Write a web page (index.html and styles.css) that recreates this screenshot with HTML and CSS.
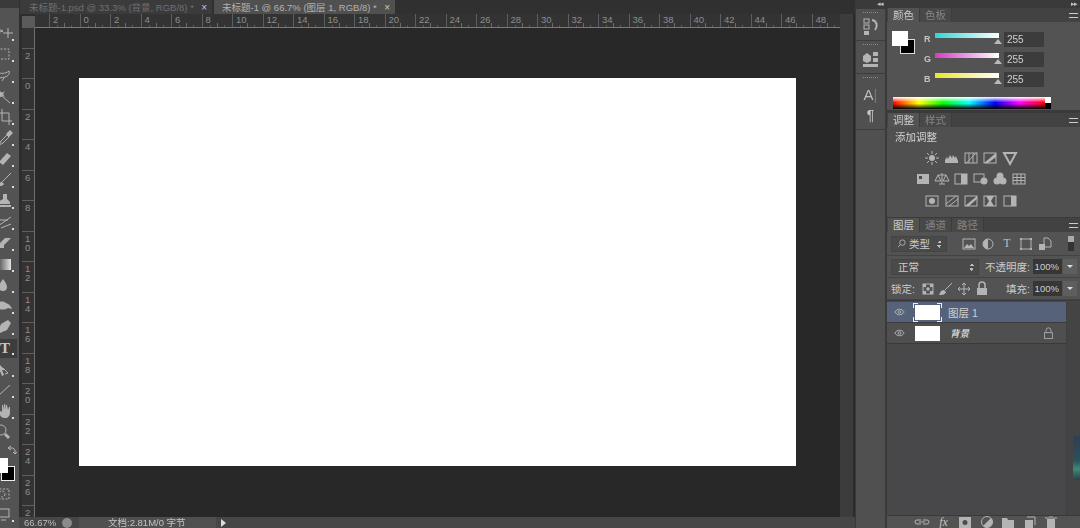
FILE: index.html
```html
<!DOCTYPE html>
<html lang="zh">
<head>
  <meta charset="utf-8">
  <link rel="stylesheet" href="styles.css">
  <title>Photoshop</title>
</head>
<body>
<div class="app">

  <!-- tools -->
  <nav class="tools">
    <div class="tool more"><svg class="ico" viewBox="0 0 16 16"><path d="M-2 3l7 3-3 1zM10 3v10M5 8h10"/></svg></div>
    <div class="tool more"><svg class="ico dash" viewBox="0 0 16 16"><rect x="-1" y="3" width="12" height="10"/></svg></div>
    <div class="tool more"><svg class="ico" viewBox="0 0 16 16"><path d="M0 5c3 2 7 2 11-1 1 3-1 5-4 6-2 1-2 3-3 4M0 10c2 1 4 1 6 0"/></svg></div>
    <div class="tool more"><svg class="ico" viewBox="0 0 16 16"><path d="M0 5l4 3 8 7M0 9l4-1 1-4" /><path class="solid" d="M1 2l3 3 3-2-2 3 2 3-3-2-3 2z"/></svg></div>
    <div class="tool more"><svg class="ico" viewBox="0 0 16 16"><path d="M4 0v12h10M0 4h11v12"/></svg></div>
    <div class="tool more"><svg class="ico" viewBox="0 0 16 16"><path d="M1 15l2-4 6-6 2 2-6 6z"/><path class="solid" d="M8 4l4-4 3 3-4 4z"/></svg></div>
    <div class="tool more"><svg class="ico" viewBox="0 0 16 16"><path class="solid" d="M1 11l8-9 4 3-8 9z"/><path d="M4 7l4 4"/></svg></div>
    <div class="tool more"><svg class="ico" viewBox="0 0 16 16"><path d="M13 1L4 10"/><path class="solid" d="M1 14c0-3 1-4 3-4l2 2c-1 2-3 2-5 2z"/></svg></div>
    <div class="tool more"><svg class="ico" viewBox="0 0 16 16"><path class="solid" d="M5 1h4v5l3 3v2H0V9l5-3zM0 12h13v2H0z"/></svg></div>
    <div class="tool more"><svg class="ico" viewBox="0 0 16 16"><path d="M0 12L13 3M0 6h10M3 14l10-4"/></svg></div>
    <div class="tool more"><svg class="ico" viewBox="0 0 16 16"><path class="solid" d="M0 10l7-7h6l-7 7v3H0z"/></svg></div>
    <div class="tool more"><div class="grad-ico"></div></div>
    <div class="tool more"><svg class="ico" viewBox="0 0 16 16"><path class="solid" d="M5 2c2 3 4 5 4 8a4 4 0 0 1-8 0c0-3 2-5 4-8z"/></svg></div>
    <div class="tool more"><svg class="ico" viewBox="0 0 16 16"><path class="solid" d="M-2 6c3-3 7-3 10-1 3 1 5 3 6 6l-4-1c-3 2-8 2-12 0z"/></svg></div>
    <div class="tool more"><svg class="ico" viewBox="0 0 16 16"><path class="solid" d="M0 12l3-7 7-4 3 3-4 7-7 3z"/></svg></div>
    <div class="tool more selected"><span class="t-tool">T</span></div>
    <div class="tool more"><svg class="ico" viewBox="0 0 16 16"><path class="solid" d="M0 2l7 7H4l2 5-2 1-2-5-2 2z"/><path d="M5 7l5 5-3 1"/></svg></div>
    <div class="tool more"><svg class="ico" viewBox="0 0 16 16"><path d="M0 14L12 3"/></svg></div>
    <div class="tool more"><svg class="ico" viewBox="0 0 16 16"><path class="solid" d="M1 7l3 2V2h1l1 5V1h1l1 6V2h1l1 5 1-3h1v5c0 4-2 6-5 6s-4-1-5-3z"/></svg></div>
    <div class="tool"><svg class="ico" viewBox="0 0 16 16"><circle cx="3" cy="6" r="5"/><path d="M7 10l4 4" stroke-width="3"/></svg></div>
    <div class="swatches">
      <svg class="swap" viewBox="0 0 10 10"><path d="M1 3h5l2 2v4M4 1L1 3l3 2M6 7l2 2 2-2"/></svg>
      <div class="fg-bg"><span class="tool-bg"></span><span class="tool-fg"></span></div>
    </div>
    <div class="tool mask"><svg class="ico dash" viewBox="0 0 16 16"><rect x="-2" y="3" width="13" height="10"/><circle cx="4" cy="8" r="3"/></svg></div>
    <div class="tool more"><svg class="ico" viewBox="0 0 16 16"><rect x="0" y="3" width="11" height="8"/><path d="M3 14h5"/></svg></div>
  </nav>

  <!-- document area -->
  <main class="work">
    <div class="tabs">
      <div class="tab">
        <span class="tab-name">未标题-1.psd @ 33.3% (背景, RGB/8) *</span><span class="tab-x">×</span>
      </div>
      <div class="tab tab-active">
        <span class="tab-name">未标题-1 @ 66.7% (图层 1, RGB/8) *</span><span class="tab-x">×</span>
      </div>
    </div>
    <div class="doc">
      <div class="corner"></div>
      <div class="ruler-top">
        <span class="mark">2</span><span class="mark">0</span><span class="mark">2</span><span class="mark">4</span><span class="mark">6</span><span class="mark">8</span><span class="mark">10</span><span class="mark">12</span><span class="mark">14</span><span class="mark">16</span><span class="mark">18</span><span class="mark">20</span><span class="mark">22</span><span class="mark">24</span><span class="mark">26</span><span class="mark">28</span><span class="mark">30</span><span class="mark">32</span><span class="mark">34</span><span class="mark">36</span><span class="mark">38</span><span class="mark">40</span><span class="mark">42</span><span class="mark">44</span><span class="mark">46</span><span class="mark">48</span><span class="mark"></span>
      </div>
      <div class="scroll-v"></div>
      <div class="ruler-left">
        <span class="vmark">2</span><span class="vmark">0</span><span class="vmark">2</span><span class="vmark">4</span><span class="vmark">6</span><span class="vmark">8</span><span class="vmark">1<br>0</span><span class="vmark">1<br>2</span><span class="vmark">1<br>4</span><span class="vmark">1<br>6</span><span class="vmark">1<br>8</span><span class="vmark">2<br>0</span><span class="vmark">2<br>2</span><span class="vmark">2<br>4</span><span class="vmark">2<br>6</span><span class="vmark">2<br>8</span>
      </div>
      <div class="pasteboard">
        <div class="sheet"></div>
      </div>
    </div>
    <div class="status">
      <span class="zoom-val">66.67%</span>
      <span class="status-ico"></span>
      <span class="doc-info">文档:2.81M/0 字节</span>
      <span class="status-arrow"></span>
    </div>
  </main>

  <!-- collapsed dock -->
  <div class="dock">
    <div class="dock-arrows">◂◂</div>
    <div class="dock-body">
      <div class="dock-group g1">
        <svg class="ico big" viewBox="0 0 20 20"><rect x="3" y="2" width="5" height="4"/><rect x="3" y="8" width="5" height="4"/><rect class="solid" x="3" y="14" width="5" height="4"/><path d="M11 3c5 1 6 6 3 10" stroke-width="2"/></svg>
      </div>
      <div class="dock-group g2">
        <svg class="ico big" viewBox="0 0 20 20"><path class="solid" d="M2 7l4-3 4 3v5l-4 2-4-2zM12 3h5v4h-5zM12 9h5v4h-5zM2 15h15v3H2z"/></svg>
      </div>
      <div class="dock-group g3">
        <span class="dock-a">A<i>|</i></span>
        <span class="dock-p">¶</span>
      </div>
    </div>
  </div>

  <!-- panels -->
  <aside class="panels">
    <div class="collapse">▸▸</div>

    <section class="panel panel-color">
      <header class="panel-tabs">
        <span class="ptab on">颜色</span><span class="ptab">色板</span>
        <span class="pmenu"></span>
      </header>
      <div class="color-top">
        <div class="color-chips"><span class="chip-bg"></span><span class="chip-fg"></span></div>
        <div class="channels">
          <div class="channel"><b>R</b><span class="slide slide-r"><i class="thumb"></i></span><span class="num">255</span></div>
          <div class="channel"><b>G</b><span class="slide slide-g"><i class="thumb"></i></span><span class="num">255</span></div>
          <div class="channel"><b>B</b><span class="slide slide-b"><i class="thumb"></i></span><span class="num">255</span></div>
        </div>
      </div>
      <div class="spectrum"><div class="ramp"></div><div class="ends"></div></div>
    </section>

    <section class="panel panel-adjust">
      <header class="panel-tabs">
        <span class="ptab on">调整</span><span class="ptab">样式</span>
        <span class="pmenu"></span>
      </header>
      <p class="adj-title">添加调整</p>
      <div class="adj-row">
        <svg class="ico" viewBox="0 0 16 16"><circle class="solid" cx="8" cy="8" r="3"/><path d="M8 1v3M8 12v3M1 8h3M12 8h3M3 3l2 2M11 11l2 2M13 3l-2 2M5 11l-2 2"/></svg>
        <svg class="ico" viewBox="0 0 16 16"><path class="solid" d="M1 13V10l2-3 1 2 2-4 2 3 1-3 2 3 1-2 2 5v2z"/></svg>
        <svg class="ico" viewBox="0 0 16 16"><rect x="2" y="3" width="12" height="10"/><path d="M2 13C7 12 9 5 14 3M6 3v10M10 3v10"/></svg>
        <svg class="ico" viewBox="0 0 16 16"><rect x="2" y="3" width="12" height="10"/><path class="solid" d="M2 13L14 3v4L6 13z"/></svg>
        <svg class="ico" viewBox="0 0 16 16"><path d="M2 3h12L8 14z" stroke-width="2"/></svg>
      </div>
      <div class="adj-row">
        <svg class="ico" viewBox="0 0 16 16"><path class="solid" d="M2 3h12v10H2z"/><path class="cut" d="M4 5h3v3H4z"/></svg>
        <svg class="ico" viewBox="0 0 16 16"><path d="M8 2v11M4 4h8M1 10l3-6 3 6zM9 10l3-6 3 6zM5 13h6"/></svg>
        <svg class="ico" viewBox="0 0 16 16"><rect x="2" y="3" width="12" height="10"/><path class="solid" d="M8 3h6v10H8z"/></svg>
        <svg class="ico" viewBox="0 0 16 16"><rect x="1" y="3" width="10" height="8"/><circle class="solid" cx="11" cy="10" r="3.5"/></svg>
        <svg class="ico" viewBox="0 0 16 16"><circle class="solid" cx="8" cy="5" r="3.5"/><circle class="solid" cx="5" cy="10" r="3.5"/><circle class="solid" cx="11" cy="10" r="3.5"/></svg>
        <svg class="ico" viewBox="0 0 16 16"><rect x="2" y="3" width="12" height="10"/><path d="M2 6.500h12M2 9.500h12M6 3v10M10 3v10"/></svg>
      </div>
      <div class="adj-row">
        <svg class="ico" viewBox="0 0 16 16"><rect x="2" y="3" width="12" height="10"/><circle class="solid" cx="8" cy="8" r="3"/></svg>
        <svg class="ico" viewBox="0 0 16 16"><rect x="2" y="3" width="12" height="10"/><path d="M2 11L12 3M5 13l9-7"/></svg>
        <svg class="ico" viewBox="0 0 16 16"><rect x="2" y="3" width="12" height="10"/><path class="solid" d="M2 13L14 3v3L6 13z"/></svg>
        <svg class="ico" viewBox="0 0 16 16"><rect x="2" y="3" width="12" height="10"/><path class="solid" d="M4 3h8L9 8l3 5H4l3-5z"/></svg>
        <svg class="ico" viewBox="0 0 16 16"><rect x="2" y="3" width="12" height="10"/><path class="solid" d="M9 3h5v10H9z"/></svg>
      </div>
    </section>

    <section class="panel panel-layers">
      <header class="panel-tabs">
        <span class="ptab on">图层</span><span class="ptab">通道</span><span class="ptab">路径</span>
        <span class="pmenu"></span>
      </header>
      <div class="layer-filter">
        <div class="field kind"><svg class="ico tiny" viewBox="0 0 10 10"><circle cx="6" cy="4" r="3"/><path d="M4 6L1 9"/></svg><span>类型</span><em class="updown"></em></div>
        <div class="filter-icons">
          <svg class="ico" viewBox="0 0 16 16"><rect x="2" y="3" width="12" height="10"/><path class="solid" d="M3 12l3-4 2 2 2-2 3 4z"/></svg>
          <svg class="ico" viewBox="0 0 16 16"><circle cx="8" cy="8" r="5"/><path class="solid" d="M8 3a5 5 0 0 0 0 10z"/></svg>
          <span class="filter-t">T</span>
          <svg class="ico" viewBox="0 0 16 16"><rect x="3" y="3" width="10" height="10"/><path class="solid" d="M2 2h2v2H2zM12 2h2v2h-2zM2 12h2v2H2zM12 12h2v2h-2z"/></svg>
          <svg class="ico" viewBox="0 0 16 16"><path d="M7 2h4l3 3v6H7z"/><path class="solid" d="M2 8h6v6H2z"/></svg>
        </div>
        <span class="filter-toggle"></span>
      </div>
      <div class="layer-blend">
        <div class="field mode"><span>正常</span><em class="updown"></em></div>
        <label class="lbl">不透明度:</label>
        <span class="pct">100%</span><span class="step"></span>
      </div>
      <div class="layer-lock">
        <label class="lbl lock-lbl">锁定:</label>
        <svg class="ico" viewBox="0 0 16 16"><path class="solid" d="M3 3h3v3H3zM10 3h3v3h-3zM6.500 6.500h3v3h-3zM3 10h3v3H3zM10 10h3v3h-3z"/><rect x="3" y="3" width="10" height="10"/></svg>
        <svg class="ico" viewBox="0 0 16 16"><path d="M14 2L7 9"/><path class="solid" d="M1 14c1-1 1-5 5-5l2 2c-1 3-4 3-7 3z"/></svg>
        <svg class="ico" viewBox="0 0 16 16"><path d="M8 2v12M2 8h12M6 4l2-2 2 2M6 12l2 2 2-2M4 6L2 8l2 2M12 6l2 2-2 2"/></svg>
        <svg class="ico" viewBox="0 0 16 16"><path class="solid" d="M3 7h10v7H3z"/><path d="M5 7V4a3 3 0 0 1 6 0v3" stroke-width="1.500"/></svg>
        <label class="lbl fill-lbl">填充:</label>
        <span class="pct">100%</span><span class="step"></span>
      </div>
      <div class="layer-body">
        <div class="layer-list">
          <div class="layer active">
            <svg class="eye" viewBox="0 0 12 8"><path d="M1 4c2-4 8-4 10 0-2 4-8 4-10 0z"/><circle cx="6" cy="4" r="1.500"/></svg>
            <span class="thumb-box framed"></span>
            <span class="layer-name">图层 1</span>
          </div>
          <div class="layer">
            <svg class="eye" viewBox="0 0 12 8"><path d="M1 4c2-4 8-4 10 0-2 4-8 4-10 0z"/><circle cx="6" cy="4" r="1.500"/></svg>
            <span class="thumb-box"></span>
            <span class="layer-name bg-name">背景</span>
            <svg class="ico lock" viewBox="0 0 16 16"><rect x="3" y="7" width="10" height="7"/><path d="M5 7V4a3 3 0 0 1 6 0v3"/></svg>
          </div>
        </div>
        <div class="list-scroll"><span class="teal"></span></div>
      </div>
      <footer class="layer-foot">
        <svg class="ico" viewBox="0 0 16 16"><path d="M7 6H3a2 2 0 0 0 0 4h4M9 6h4a2 2 0 0 1 0 4H9M5 8h6"/></svg>
        <span class="fx">fx</span>
        <svg class="ico" viewBox="0 0 16 16"><path class="solid" d="M2 3h12v11H2z"/><circle class="cut" cx="8" cy="8.500" r="2.500"/></svg>
        <svg class="ico" viewBox="0 0 16 16"><circle cx="8" cy="8" r="5.500"/><path class="solid" d="M12 4a5.500 5.500 0 0 1-8 8z"/></svg>
        <svg class="ico" viewBox="0 0 16 16"><path class="solid" d="M2 4h5l1 2h6v8H2z"/></svg>
        <svg class="ico" viewBox="0 0 16 16"><path class="solid" d="M3 6h8v8H3z"/><path d="M5 3h8v8"/></svg>
        <svg class="ico" viewBox="0 0 16 16"><path class="solid" d="M4 5h8v9H4z"/><path d="M2 4h12M6 2h4"/></svg>
      </footer>
    </section>
  </aside>

</div>
</body>
</html>
```

FILE: styles.css
```css
* {
  box-sizing: border-box;
}

html, body {
  margin: 0;
  height: 528px;
  overflow: hidden;
  background: #333;
}

body {
  font-family: "Liberation Sans", "Noto Sans CJK SC", sans-serif;
  font-size: 10px;
  color: #c4c4c4;
}

.app {
  display: flex;
  width: 1080px;
  height: 528px;
  overflow: hidden;
  filter: blur(0.4px);
}

/* shared icon look */
.ico {
  width: 16px;
  height: 16px;
  flex: none;
  overflow: visible;
  fill: none;
  stroke: #b4b4b4;
  stroke-width: 1;
}
.ico .solid {
  fill: #b4b4b4;
  stroke: none;
}
.ico .cut {
  fill: #4d4d4d;
  stroke: none;
}
.ico.dash {
  stroke-dasharray: 2 1.500;
}

/* tools */
.tools {
  width: 19px;
  flex: none;
  padding-top: 14.500px;
  background: #535353;
  border-top: 8px solid #3a3a3a;
  display: flex;
  flex-direction: column;
  overflow: hidden;
}
.tool {
  position: relative;
  height: 21px;
  flex: none;
  display: flex;
  align-items: center;
}
.tool .ico {
  margin-left: -2px;
}
.tool.more::after {
  content: "";
  position: absolute;
  right: 5px;
  bottom: 3px;
  width: 2px;
  height: 2px;
  background: #ddd;
}
.tool.selected {
  background: #3d3d3d;
  height: 19px;
  margin: 1px 2px 1px 0;
}
.tool.selected::after {
  right: 3px;
}
.t-tool {
  font: bold 15px "Liberation Serif", serif;
  color: #c6c6c6;
}
.grad-ico {
  width: 11px;
  height: 11px;
  background: linear-gradient(to right, #666, #e4e4e4);
}
.swatches {
  height: 41px;
  flex: none;
  padding-left: 7px;
}
.swap {
  width: 10px;
  height: 10px;
  display: block;
  margin-top: 2px;
  fill: none;
  stroke: #b5b5b5;
}
.fg-bg {
  position: relative;
  height: 28px;
  margin-left: -7px;
}
.tool-bg {
  position: absolute;
  left: 1px;
  top: 11px;
  width: 14px;
  height: 15px;
  background: #000;
  border: 1px solid #eee;
}
.tool-fg {
  position: absolute;
  left: 0;
  top: 3px;
  width: 8px;
  height: 15px;
  background: #fff;
}
.mask {
  height: 20px;
}

/* document area */
.work {
  width: 836px;
  flex: none;
  display: flex;
  flex-direction: column;
}
.tabs {
  height: 14px;
  flex: none;
  display: flex;
  background: #303030;
  padding-left: 1px;
  gap: 2px;
}
.tab {
  width: 192px;
  padding: 0 5px 0 9px;
  display: flex;
  justify-content: space-between;
  align-items: center;
  background: #3b3b3b;
  color: #707070;
  font-size: 9.500px;
  white-space: nowrap;
}
.tab-active {
  width: 181px;
  padding-left: 8px;
  background: #505050;
  color: #b2b2b2;
}
.tab-x {
  color: #c8c8c8;
  font-size: 10px;
}
.doc {
  flex: 1;
  min-height: 0;
  display: grid;
  grid-template-columns: 3px 13px 805px 15px;
  grid-template-rows: 14px 1fr;
  background: #2e2e2e;
}
.corner {
  grid-column: 2;
  grid-row: 1;
  margin-top: 2px;
  background: #5b5b5b;
}
.ruler-top {
  grid-column: 3;
  grid-row: 1;
  display: flex;
  overflow: hidden;
  padding-left: 14px;
  background: #333;
  border-bottom: 1px solid #7a7a7a;
}
.mark {
  width: 30.500px;
  flex: none;
  padding: 1px 0 0 3px;
  line-height: 10px;
  font-size: 9.500px;
  color: #8e8e8e;
  border-left: 1px solid #5e5e5e;
  background:
    linear-gradient(#6a6a6a, #6a6a6a) 50% 100% / 1px 4px no-repeat,
    linear-gradient(#5a5a5a, #5a5a5a) 25% 100% / 1px 2px no-repeat,
    linear-gradient(#5a5a5a, #5a5a5a) 75% 100% / 1px 2px no-repeat;
}
.scroll-v {
  grid-column: 4;
  grid-row: 1 / 3;
  background: #3c3c3c;
  border-right: 2px solid #2a2a2a;
}
.ruler-left {
  grid-column: 2;
  grid-row: 2;
  overflow: hidden;
  padding-top: 19.500px;
  background: #333;
  border-right: 1px solid #6f6f6f;
  display: flex;
  flex-direction: column;
}
.vmark {
  height: 30.500px;
  flex: none;
  padding: 2px 0 0 3px;
  font-size: 9.500px;
  line-height: 9px;
  color: #8e8e8e;
  border-top: 1px solid #5e5e5e;
}
.pasteboard {
  grid-column: 3;
  grid-row: 2;
  padding: 50px 0 0 44px;
  background: #282828;
  overflow: hidden;
}
.sheet {
  width: 717px;
  height: 388px;
  background: #fff;
}
.status {
  height: 11px;
  flex: none;
  display: flex;
  align-items: center;
  background: #464646;
  overflow: hidden;
  line-height: 11px;
}
.zoom-val {
  width: 43px;
  padding-left: 5px;
  font-size: 9.500px;
  color: #bdbdbd;
}
.status-ico {
  width: 10px;
  height: 10px;
  margin-right: 7px;
  border-radius: 50%;
  background: #8a8a8a;
}
.doc-info {
  width: 137px;
  height: 11px;
  padding-left: 29px;
  font-size: 9.500px;
  color: #c2c2c2;
  background: #505050;
}
.status-arrow {
  margin-left: 5px;
  width: 0;
  height: 0;
  border-left: 5px solid #ddd;
  border-top: 4px solid transparent;
  border-bottom: 4px solid transparent;
}

/* collapsed dock */
.dock {
  width: 32px;
  flex: none;
  padding: 0 2px 0 1px;
  display: flex;
  flex-direction: column;
  background: #3a3a3a;
}
.dock-arrows {
  height: 9px;
  text-align: right;
  padding-right: 2px;
  font-size: 7px;
  line-height: 8px;
  letter-spacing: -1px;
  color: #c0c0c0;
}
.dock-body {
  flex: 1;
  background: #505050;
}
.dock-group {
  display: flex;
  flex-direction: column;
  align-items: center;
  border-bottom: 1px solid #3d3d3d;
  padding-top: 3px;
}
.dock-group::before {
  content: "";
  width: 15px;
  height: 1px;
  margin-bottom: 4px;
  background: repeating-linear-gradient(to right, #8a8a8a 0 1px, transparent 1px 2px);
}
.g1 {
  height: 32px;
}
.g2 {
  height: 33px;
}
.g3 {
  height: 56px;
}
.ico.big {
  width: 20px;
  height: 20px;
}
.dock-a {
  margin-top: 3px;
  font-size: 15px;
  line-height: 19px;
  color: #bdbdbd;
}
.dock-a i {
  font-style: normal;
  color: #777;
}
.dock-p {
  font-size: 14px;
  line-height: 22px;
  color: #c8c8c8;
}

/* panels */
.panels {
  width: 193px;
  flex: none;
  display: flex;
  flex-direction: column;
  background: #3a3a3a;
}
.collapse {
  height: 8px;
  flex: none;
  text-align: right;
  padding-right: 3px;
  font-size: 7px;
  line-height: 8px;
  letter-spacing: -1px;
  color: #c0c0c0;
}
.panel {
  display: flex;
  flex-direction: column;
  background: #535353;
}
.panel-tabs {
  height: 14px;
  flex: none;
  display: flex;
  align-items: stretch;
  padding-left: 1px;
  background: #424242;
}
.ptab {
  width: 32px;
  text-align: center;
  line-height: 14px;
  font-size: 10.500px;
  color: #868686;
  background: #484848;
  border-right: 1px solid #3c3c3c;
}
.ptab.on {
  color: #cdcdcd;
  background: #535353;
}
.pmenu {
  width: 9px;
  height: 5px;
  margin: 5px 2px 0 auto;
  border-top: 1px solid #ccc;
  border-bottom: 1px solid #ccc;
}
.panel-color {
  height: 102px;
  margin-bottom: 3px;
}
.color-top {
  display: flex;
  padding: 9px 0 0 5px;
}
.color-chips {
  position: relative;
  width: 32px;
  height: 24px;
}
.chip-fg, .chip-bg {
  position: absolute;
  display: block;
}
.chip-bg {
  left: 8px;
  top: 8px;
  width: 15px;
  height: 15px;
  background: #000;
  border: 1px solid #ddd;
}
.chip-fg {
  left: 0;
  top: 0;
  width: 16px;
  height: 15px;
  background: #fff;
}
.channels {
  display: flex;
  flex-direction: column;
  gap: 4px;
}
.channel {
  height: 16px;
  display: flex;
  align-items: center;
}
.channel b {
  width: 11px;
  font-size: 9px;
  color: #c4c4c4;
}
.slide {
  position: relative;
  width: 64px;
  height: 5px;
  margin: -7px 5px 0 0;
}
.slide-r { background: linear-gradient(to right, #2fd6d6, #fff); }
.slide-g { background: linear-gradient(to right, #d43bc4, #fff); }
.slide-b { background: linear-gradient(to right, #e6e62a, #fff); }
.thumb {
  position: absolute;
  right: -3px;
  top: 6px;
  border-left: 4px solid transparent;
  border-right: 4px solid transparent;
  border-bottom: 5px solid #b9b9b9;
}
.num {
  width: 40px;
  height: 15px;
  padding-left: 3px;
  line-height: 15px;
  font-size: 10px;
  color: #cfcfcf;
  background: #3c3c3c;
}
.spectrum {
  display: flex;
  width: 158px;
  height: 12px;
  margin: 10px 0 0 6px;
}
.ramp {
  flex: 1;
  background:
    linear-gradient(to bottom, #fff, rgba(255,255,255,0) 45%, rgba(0,0,0,0) 55%, #000),
    linear-gradient(to right, #f00, #ff0 17%, #0f0 33%, #0ff 50%, #00f 67%, #f0f 83%, #f00);
}
.ends {
  width: 6px;
  background: linear-gradient(#fff 50%, #000 50%);
}
.panel-adjust {
  height: 104px;
  margin-bottom: 1px;
  background: #505050;
}
.adj-title {
  margin: 4px 0 3px 8px;
  font-size: 10.500px;
  line-height: 13px;
  color: #d2d2d2;
}
.adj-row {
  width: 168px;
  height: 21.500px;
  display: flex;
  justify-content: center;
  align-items: center;
  gap: 3.300px;
}
.panel-layers {
  flex: 1;
  min-height: 0;
  background: #535353;
}
.layer-filter {
  height: 24px;
  flex: none;
  display: flex;
  align-items: center;
  padding-left: 4px;
  border-bottom: 1px solid #434343;
}
.field {
  height: 16px;
  display: flex;
  align-items: center;
  padding-left: 5px;
  background: #4a4a4a;
  border: 1px solid #444;
  color: #cdcdcd;
  font-size: 10.500px;
}
.kind {
  width: 56px;
  gap: 3px;
}
.ico.tiny {
  width: 9px;
  height: 9px;
}
.updown {
  margin-left: auto;
  margin-right: 4px;
  width: 5px;
  height: 8px;
  background:
    linear-gradient(to bottom right, transparent 50%, #bbb 50%) 0 0 / 3px 3px no-repeat,
    linear-gradient(to bottom left, transparent 50%, #bbb 50%) 100% 0 / 3px 3px no-repeat,
    linear-gradient(to top right, transparent 50%, #bbb 50%) 0 100% / 3px 3px no-repeat,
    linear-gradient(to top left, transparent 50%, #bbb 50%) 100% 100% / 3px 3px no-repeat;
}
.filter-icons {
  display: flex;
  align-items: center;
  gap: 3px;
  margin-left: 14px;
}
.filter-t {
  width: 16px;
  text-align: center;
  font: 12px "Liberation Serif", serif;
  color: #bdbdbd;
}
.filter-toggle {
  width: 6px;
  height: 15px;
  margin-left: 15px;
  background: linear-gradient(#aaa 40%, #333 40%);
}
.layer-blend, .layer-lock {
  height: 22px;
  flex: none;
  display: flex;
  align-items: center;
  padding-left: 4px;
  border-bottom: 1px solid #434343;
}
.mode {
  width: 88px;
  padding-left: 6px;
}
.lbl {
  font-size: 10.500px;
  color: #cdcdcd;
  white-space: nowrap;
}
.layer-blend .lbl {
  margin: 0 3px 0 6px;
}
.pct {
  width: 29px;
  height: 15px;
  line-height: 15px;
  text-align: right;
  padding-right: 3px;
  font-size: 9.500px;
  color: #cfcfcf;
  background: #363636;
}
.step {
  width: 14px;
  height: 15px;
  margin-left: 1px;
  background: #5e5e5e;
  position: relative;
}
.step::after {
  content: "";
  position: absolute;
  left: 4px;
  top: 6px;
  border-left: 3px solid transparent;
  border-right: 3px solid transparent;
  border-top: 3px solid #ddd;
}
.lock-lbl {
  width: 26px;
  margin-right: 3px;
}
.layer-lock .ico {
  margin-right: 2px;
}
.fill-lbl {
  margin: 0 3px 0 14px;
}
.layer-body {
  flex: 1;
  min-height: 0;
  display: flex;
  padding-top: 1px;
  background: #48474a;
  border-top: 1px solid #3a3a3a;
}
.layer-list {
  flex: 1;
  border-right: 1px solid #3f3f3f;
}
.layer {
  height: 21px;
  display: flex;
  align-items: center;
  border-bottom: 1px solid #3a3a3a;
  background: #4f4f50;
  padding-left: 7px;
}
.layer.active {
  background: #55627a;
}
.eye {
  width: 11px;
  height: 8px;
  fill: none;
  stroke: #b8b8b8;
}
.thumb-box {
  position: relative;
  width: 25px;
  height: 15px;
  margin-left: 10px;
  background: #fff;
}
/* corner brackets round the selected thumbnail */
.framed::before {
  content: "";
  position: absolute;
  inset: -2px;
  background:
    linear-gradient(#eee, #eee) 0 0 / 5px 1px no-repeat,
    linear-gradient(#eee, #eee) 0 0 / 1px 5px no-repeat,
    linear-gradient(#eee, #eee) 100% 0 / 5px 1px no-repeat,
    linear-gradient(#eee, #eee) 100% 0 / 1px 5px no-repeat,
    linear-gradient(#eee, #eee) 0 100% / 5px 1px no-repeat,
    linear-gradient(#eee, #eee) 0 100% / 1px 5px no-repeat,
    linear-gradient(#eee, #eee) 100% 100% / 5px 1px no-repeat,
    linear-gradient(#eee, #eee) 100% 100% / 1px 5px no-repeat;
}
.layer-name {
  margin-left: 8px;
  font-size: 10.500px;
  color: #d0d0d0;
}
.bg-name {
  margin-left: 10px;
  font-style: italic;
  font-size: 9.500px;
  color: #f2f2f2;
}
.lock {
  width: 13px;
  height: 13px;
  margin-left: auto;
  margin-right: 11px;
}
.list-scroll {
  width: 13px;
  flex: none;
  padding: 134px 0 0 6px;
  background: #444;
}
.teal {
  display: block;
  width: 7px;
  height: 44px;
  background: linear-gradient(#2f3f55, #2c4f5a 55%, #3a8a78 75%, #2f3f4c);
}
.layer-foot {
  height: 13px;
  flex: none;
  display: flex;
  align-items: center;
  gap: 5.500px;
  padding-left: 27px;
  background: #535353;
  border-top: 1px solid #3a3a3a;
  overflow: hidden;
}
.fx {
  width: 16px;
  text-align: center;
  font: italic 12px "Liberation Serif", serif;
  color: #c4c4c4;
}
```
